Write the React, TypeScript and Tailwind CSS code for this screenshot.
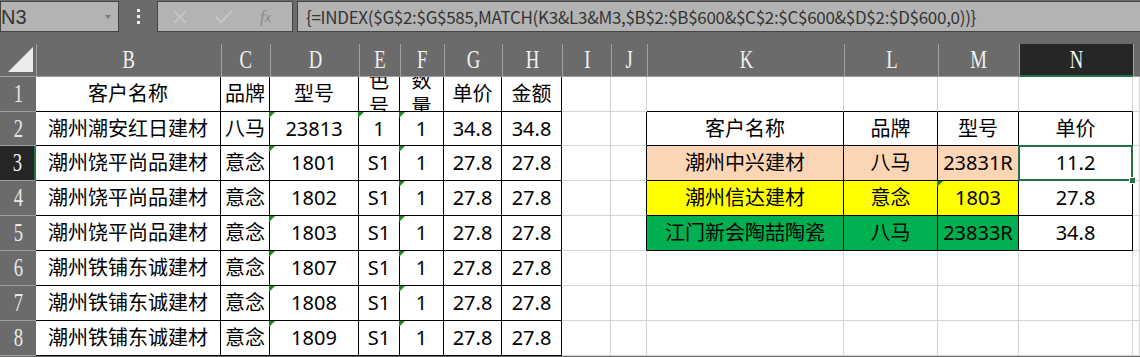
import React from 'react'

const COLS = ['', 'B', 'C', 'D', 'E', 'F', 'G', 'H', 'I', 'J', 'K', 'L', 'M', 'N', '']
const ROW_H = ['h-[35px]', 'h-[34px]', 'h-[35px]', 'h-[35px]', 'h-[35px]', 'h-[35px]', 'h-[35px]', 'h-[35px]']

type Cell = { text?: string; wrap?: string[]; fill?: string; tri?: boolean }

const left: string[][] = [
  ['客户名称', '品牌', '型号', '', '', '单价', '金额'],
  ['潮州潮安红日建材', '八马', '23813', '1', '1', '34.8', '34.8'],
  ['潮州饶平尚品建材', '意念', '1801', 'S1', '1', '27.8', '27.8'],
  ['潮州饶平尚品建材', '意念', '1802', 'S1', '1', '27.8', '27.8'],
  ['潮州饶平尚品建材', '意念', '1803', 'S1', '1', '27.8', '27.8'],
  ['潮州铁铺东诚建材', '意念', '1807', 'S1', '1', '27.8', '27.8'],
  ['潮州铁铺东诚建材', '意念', '1808', 'S1', '1', '27.8', '27.8'],
  ['潮州铁铺东诚建材', '意念', '1809', 'S1', '1', '27.8', '27.8'],
]

const right: { vals: string[]; fill?: string }[] = [
  { vals: ['客户名称', '品牌', '型号', '单价'] },
  { vals: ['潮州中兴建材', '八马', '23831R', '11.2'], fill: 'bg-[#fcd5b4]' },
  { vals: ['潮州信达建材', '意念', '1803', '27.8'], fill: 'bg-[#ffff00]' },
  { vals: ['江门新会陶喆陶瓷', '八马', '23833R', '34.8'], fill: 'bg-[#00b050]' },
]

// c: 1..14 (B..O), r: 1..8
function inTable(c: number, r: number) {
  if (c >= 1 && c <= 7 && r >= 1 && r <= 8) return true
  if (c >= 10 && c <= 13 && r >= 2 && r <= 5) return true
  return false
}

function getCell(c: number, r: number): Cell {
  if (c >= 1 && c <= 7) {
    if (r === 1 && c === 4) return { wrap: ['色', '号'] }
    if (r === 1 && c === 5) return { wrap: ['数', '量'] }
    const tri = r >= 2 && ((c === 3 && r !== 4) || (c === 4 && r === 2) || c === 5)
    return { text: left[r - 1][c - 1], tri }
  }
  if (c >= 10 && c <= 13 && r >= 2 && r <= 5) {
    const row = right[r - 2]
    return {
      text: row.vals[c - 10],
      fill: c < 13 ? row.fill : undefined,
      tri: c === 12 && r === 4,
    }
  }
  return {}
}

function HeaderLetter({ ch }: { ch: string }) {
  return (
    <span className="inline-block scale-x-[0.72] font-['Liberation_Serif',serif] text-[26px] leading-none">
      {ch}
    </span>
  )
}

function Toolbar() {
  return (
    <div className="flex h-[44px] items-start">
      <div className="relative mt-[1px] flex h-[31px] w-[119px] items-center border border-[#444] bg-[#b3b3b3] font-['Liberation_Sans',sans-serif] text-[20px] text-[#333]">
        N3
        <span className="absolute right-[7px] top-[13px] h-0 w-0 border-x-[3px] border-t-[4px] border-x-transparent border-t-[#7a7a7a]" />
      </div>
      <div className="flex h-[32px] w-[38px] flex-col items-center justify-center gap-[3px]">
        <span className="h-[3px] w-[3px] bg-[#eee]" />
        <span className="h-[3px] w-[3px] bg-[#eee]" />
        <span className="h-[3px] w-[3px] bg-[#eee]" />
      </div>
      <div className="mt-[1px] flex h-[31px] w-[136px] items-center border border-[#444] bg-[#b3b3b3]">
        <svg className="ml-[14px]" width="16" height="16" viewBox="0 0 16 16">
          <path d="M2 2 L14 14 M14 2 L2 14" stroke="#c9c9c9" strokeWidth="1.6" fill="none" />
        </svg>
        <svg className="ml-[27px]" width="18" height="14" viewBox="0 0 18 14">
          <path d="M1 7 L6 12 L17 1" stroke="#c9c9c9" strokeWidth="1.6" fill="none" />
        </svg>
        <span className="ml-[27px] font-['Liberation_Serif',serif] text-[17px] italic text-[#8a8a8a]">
          f<span className="text-[14px]">x</span>
        </span>
      </div>
      <div className="ml-[4px] mt-[1px] flex h-[31px] flex-1 items-center border-y border-l border-[#444] bg-[#b3b3b3] pl-[8px] font-['Noto_Sans_CJK_SC',sans-serif] text-[17px] tracking-[-0.3px] text-[#333]">
        {'{=INDEX($G$2:$G$585,MATCH(K3&L3&M3,$B$2:$B$600&$C$2:$C$600&$D$2:$D$600,0))}'}
      </div>
    </div>
  )
}

export default function App() {
  const rows = [1, 2, 3, 4, 5, 6, 7, 8]
  const cols = Array.from({ length: 14 }, (_, i) => i + 1)

  return (
    <div className="h-[357px] w-[1140px] overflow-hidden bg-[#6b6b6b] font-['Noto_Sans','Noto_Sans_CJK_SC',sans-serif]">
      <Toolbar />

      <div className="grid grid-cols-[36px_185px_49px_89px_41px_44px_58px_60px_49px_36px_197px_94px_81px_114px_7px]">
        {/* Column headers */}
        <div className="relative h-[33px] border-b border-[#9e9e9e]">
          <span className="absolute bottom-[4px] right-[3px] h-0 w-0 border-b-[25px] border-l-[25px] border-b-[#ececec] border-l-transparent" />
        </div>
        {cols.map((c) =>
          c === 13 ? (
            <div
              key={c}
              className="flex h-[33px] items-center justify-center border-b-2 border-l border-b-[#217346] border-l-[#a0a0a0] bg-[#262626] text-[#f2f2f2]"
            >
              <HeaderLetter ch={COLS[c]} />
            </div>
          ) : (
            <div
              key={c}
              className="flex h-[33px] items-center justify-center border-b border-l border-b-[#9e9e9e] border-l-[#a0a0a0] text-[#f2f2f2]"
            >
              <HeaderLetter ch={COLS[c]} />
            </div>
          ),
        )}

        {rows.map((r) => (
          <React.Fragment key={r}>
            {r === 3 ? (
              <div className={`flex items-center justify-center border-b border-r-2 border-b-[#9e9e9e] border-r-[#217346] bg-[#262626] text-[#f0f0f0] ${ROW_H[r - 1]}`}>
                <HeaderLetter ch={String(r)} />
              </div>
            ) : (
              <div className={`flex items-center justify-center border-b border-b-[#9e9e9e] text-[#e8e8e8] ${ROW_H[r - 1]}`}>
                <HeaderLetter ch={String(r)} />
              </div>
            )}

            {cols.map((c) => {
              const cell = getCell(c, r)
              const rb = inTable(c, r) || inTable(c + 1, r) ? 'border-r-black' : 'border-r-[#d4d4d4]'
              const bb = inTable(c, r) || inTable(c, r + 1) ? 'border-b-black' : 'border-b-[#d4d4d4]'
              const selected = c === 13 && r === 3
              return (
                <div
                  key={c}
                  className={`relative border-b border-r text-[20px] text-black ${rb} ${bb} ${cell.fill ?? 'bg-white'} ${ROW_H[r - 1]}`}
                >
                  <div className="flex h-full w-full flex-col items-center justify-center overflow-hidden whitespace-nowrap leading-[26px]">
                    {cell.wrap ? cell.wrap.map((w) => <span key={w}>{w}</span>) : cell.text}
                  </div>
                  {cell.tri && (
                    <span className="absolute left-[-1px] top-0 h-0 w-0 border-r-[6px] border-t-[6px] border-r-transparent border-t-[#1a8a1a]" />
                  )}
                  {selected && (
                    <div className="absolute bottom-[-1px] left-[-1px] right-[-1px] top-[-1px] z-10 border-2 border-[#217346]">
                      <span className="absolute bottom-[-5px] right-[-5px] h-[7px] w-[7px] border border-white bg-[#217346]" />
                    </div>
                  )}
                </div>
              )
            })}
          </React.Fragment>
        ))}
      </div>
    </div>
  )
}
